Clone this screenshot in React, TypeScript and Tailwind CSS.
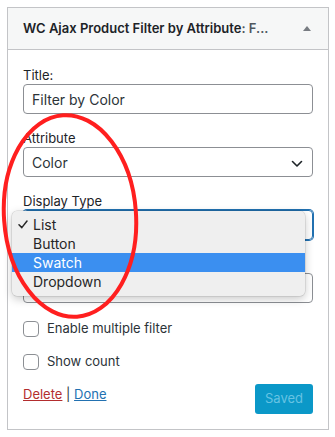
import React from 'react';

const font = { fontFamily: 'Inter, "Liberation Sans", Arial, sans-serif' };

const Label: React.FC<{ children: React.ReactNode }> = ({ children }) => (
  <div className="text-[13px] leading-[18px] text-[#1d2327]">{children}</div>
);

const Chevron = () => (
  <svg width="12" height="8" viewBox="0 0 12 8" className="absolute right-[9px] top-[12px]">
    <path d="M1.5 1.5 L6 6 L10.5 1.5" fill="none" stroke="#1d2327" strokeWidth="1.6" strokeLinecap="round" strokeLinejoin="round" />
  </svg>
);

const options = ['List', 'Button', 'Swatch', 'Dropdown'];

export default function App() {
  return (
    <div className="relative w-[335px] h-[437px] bg-white" style={font}>
      <div className="pt-[7px] pl-[7px] pr-[6px]">
        <div className="border border-[#c3c4c7] bg-white">
          {/* Header */}
          <div className="flex items-center justify-between h-[42px] bg-[#f6f7f7] border-b border-[#c3c4c7] pl-[15px] pr-[17px]">
            <div className="text-[13px] font-semibold text-[#1d2327] whitespace-nowrap">
              WC Ajax Product Filter by Attribute<span className="text-[#50575e]">: F...</span>
            </div>
            <svg width="8" height="5" viewBox="0 0 8 5">
              <path d="M0 5 L4 0 L8 5 Z" fill="#787c82" />
            </svg>
          </div>

          {/* Body */}
          <div className="px-[15px] pt-[16px] pb-[15px]">
            <Label>Title:</Label>
            <div className="h-[30px] border border-[#8c8f94] rounded-[4px] px-[8px] flex items-center text-[14px] text-[#2c3338]">
              Filter by Color
            </div>

            <div className="mt-[15px]">
              <Label>Attribute</Label>
              <div className="relative h-[30px] border border-[#8c8f94] rounded-[4px] px-[8px] flex items-center text-[14px] text-[#2c3338]">
                Color
                <Chevron />
              </div>
            </div>

            <div className="mt-[15px] relative">
              <Label>Display Type</Label>
              <div className="h-[30px] border border-[#2271b1] shadow-[0_0_0_1px_#2271b1] rounded-[4px]" />
              {/* open native menu */}
              <div className="absolute left-[-11px] top-[19px] w-[293px] pt-[4px] pb-[5px] bg-[#efefef] rounded-[5px] shadow-[0_3px_10px_rgba(0,0,0,0.22),0_0_0_0.5px_rgba(0,0,0,0.15)] z-10">
                {options.map((o, i) => (
                  <div
                    key={o}
                    className={`relative h-[19px] flex items-center pl-[21px] text-[14px] ${i === 2 ? 'bg-[#3b8ff0] text-white' : 'text-[#262626]'}`}
                  >
                    {i === 0 && (
                      <svg width="10" height="9" viewBox="0 0 10 9" className="absolute left-[6px] top-[5px]">
                        <path d="M1 4.8 L3.8 7.6 L9 1" fill="none" stroke="#262626" strokeWidth="1.5" strokeLinecap="round" strokeLinejoin="round" />
                      </svg>
                    )}
                    {o}
                  </div>
                ))}
              </div>
            </div>

            <div className="mt-[15px]">
              <Label>&nbsp;</Label>
              <div className="h-[30px] border border-[#8c8f94] rounded-[4px]" />
            </div>

            <div className="mt-[16px] h-[20px] flex items-center gap-[8px] text-[13px] text-[#2c3338]">
              <span className="w-[16px] h-[16px] border border-[#8c8f94] rounded-[4px] bg-white" />
              Enable multiple filter
            </div>
            <div className="mt-[13px] h-[20px] flex items-center gap-[8px] text-[13px] text-[#2c3338]">
              <span className="w-[16px] h-[16px] border border-[#8c8f94] rounded-[4px] bg-white" />
              Show count
            </div>

            <div className="mt-[12px] flex items-start justify-between">
              <div className="text-[13px] leading-[18px] pt-[1px] text-[#2c3338]">
                <span className="text-[#b32d2e] underline">Delete</span> | <span className="text-[#2271b1] underline">Done</span>
              </div>
              <div className="h-[30px] w-[58px] rounded-[3px] bg-[#0b98c8] text-[#66c3e3] text-[13px] flex items-center justify-center">
                Saved
              </div>
            </div>
          </div>
        </div>
      </div>

      {/* red annotation ellipse */}
      <svg className="absolute left-0 top-0 pointer-events-none z-20" width="335" height="437" viewBox="0 0 335 437">
        <ellipse cx="70" cy="216" rx="66" ry="101" transform="rotate(-4 70 216)" fill="none" stroke="#ff1f1f" strokeWidth="4" />
      </svg>
    </div>
  );
}
